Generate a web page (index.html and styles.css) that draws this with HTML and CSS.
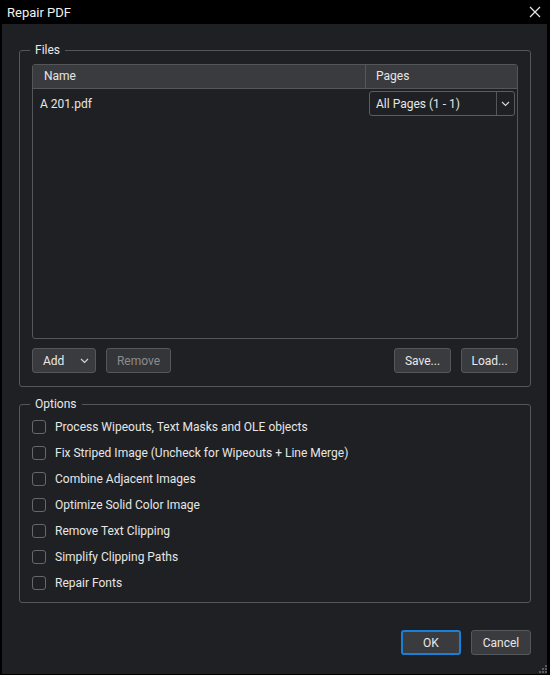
FILE: index.html
```html
<!DOCTYPE html>
<html lang="en">
<head>
    <meta charset="UTF-8">
    <title>Repair PDF</title>
    <link rel="stylesheet" href="styles.css">
</head>
<body>
    <div class="dialog">
        <div class="title-bar">
            <span class="title">Repair PDF</span>
            <svg class="close-icon" width="12" height="12" viewBox="0 0 12 12">
                <path d="M1 1 L11 11 M11 1 L1 11" stroke="#e8e8e8" stroke-width="1.2" fill="none"/>
            </svg>
        </div>

        <div class="dialog-body">
            <div class="group files-group">
                <span class="group-title">Files</span>

                <div class="file-table">
                    <div class="table-head">
                        <div class="col-name">Name</div>
                        <div class="col-pages">Pages</div>
                    </div>
                    <div class="table-row">
                        <div class="col-name">A 201.pdf</div>
                        <div class="col-pages">
                            <div class="combo">
                                <span class="combo-text">All Pages (1 - 1)</span>
                                <span class="combo-arrow">
                                    <svg width="9" height="6" viewBox="0 0 9 6"><path d="M1 1 L4.5 4.5 L8 1" stroke="#d8d8d8" stroke-width="1.1" fill="none"/></svg>
                                </span>
                            </div>
                        </div>
                    </div>
                </div>

                <div class="file-actions">
                    <button class="btn btn-add">Add
                        <svg width="9" height="6" viewBox="0 0 9 6"><path d="M1 1 L4.5 4.5 L8 1" stroke="#d8d8d8" stroke-width="1.1" fill="none"/></svg>
                    </button>
                    <button class="btn btn-remove" disabled>Remove</button>
                    <span class="spacer"></span>
                    <button class="btn btn-save">Save...</button>
                    <button class="btn btn-load">Load...</button>
                </div>
            </div>

            <div class="group options-group">
                <span class="group-title">Options</span>
                <label class="option"><span class="checkbox"></span>Process Wipeouts, Text Masks and OLE objects</label>
                <label class="option"><span class="checkbox"></span>Fix Striped Image (Uncheck for Wipeouts + Line Merge)</label>
                <label class="option"><span class="checkbox"></span>Combine Adjacent Images</label>
                <label class="option"><span class="checkbox"></span>Optimize Solid Color Image</label>
                <label class="option"><span class="checkbox"></span>Remove Text Clipping</label>
                <label class="option"><span class="checkbox"></span>Simplify Clipping Paths</label>
                <label class="option"><span class="checkbox"></span>Repair Fonts</label>
            </div>

            <div class="dialog-buttons">
                <button class="btn btn-ok">OK</button>
                <button class="btn btn-cancel">Cancel</button>
            </div>

            <svg class="grip" width="8" height="8" viewBox="0 0 8 8">
                <rect x="6" y="0" width="2" height="2" fill="#5a5b5e"/>
                <rect x="3" y="3" width="2" height="2" fill="#5a5b5e"/>
                <rect x="6" y="3" width="2" height="2" fill="#5a5b5e"/>
                <rect x="0" y="6" width="2" height="2" fill="#5a5b5e"/>
                <rect x="3" y="6" width="2" height="2" fill="#5a5b5e"/>
                <rect x="6" y="6" width="2" height="2" fill="#5a5b5e"/>
            </svg>
        </div>
    </div>
</body>
</html>
```

FILE: styles.css
```css
body {
    margin: 0;
    padding: 0;
    background: #000;
    font-family: Roboto, "Noto Sans", sans-serif;
    font-size: 12px;
    color: #e6e6e6;
}

.dialog {
    width: 550px;
    height: 675px;
    background: #000;
    display: flex;
    flex-direction: column;
}

.title-bar {
    height: 24px;
    display: flex;
    align-items: center;
    justify-content: space-between;
    padding: 0 9px 0 7px;
    color: #f2f2f2;
}

.title {
    font-size: 13px;
}

.dialog-body {
    position: relative;
    flex: 1;
    margin: 0 3px 1px 2px;
    background: #1f2023;
    padding: 26px 16px 0 17px;
}

.group {
    position: relative;
    border: 1px solid #55565a;
    border-radius: 3px;
}

.group-title {
    position: absolute;
    top: -9px;
    left: 10px;
    padding: 0 5px;
    line-height: 16px;
    background: #1f2023;
    color: #e8e8e8;
}

.files-group {
    padding: 13px 12px 13px 12px;
}

.file-table {
    height: 273px;
    border: 1px solid #55565a;
    border-radius: 3px;
    overflow: hidden;
}

.table-head {
    display: flex;
    height: 23px;
    background: #3a3b3e;
    border-bottom: 1px solid #55565a;
}

.table-head .col-name {
    width: 321px;
    padding-left: 11px;
    border-right: 1px solid #55565a;
    line-height: 23px;
}

.table-head .col-pages {
    padding-left: 10px;
    line-height: 23px;
}

.table-row {
    display: flex;
    align-items: center;
    height: 29px;
}

.table-row .col-name {
    width: 329px;
    padding-left: 7px;
}

.table-row .col-pages {
    flex: 1;
    padding-right: 2px;
}

.combo {
    display: flex;
    height: 23px;
    border: 1px solid #5c5d61;
    border-radius: 3px;
    align-items: center;
}

.combo-text {
    flex: 1;
    padding-left: 6px;
}

.combo-arrow {
    width: 17px;
    height: 23px;
    border-left: 1px solid #55565a;
    display: flex;
    align-items: center;
    justify-content: center;
}

.file-actions {
    display: flex;
    gap: 10px;
    margin-top: 9px;
}

.spacer {
    flex: 1;
}

.btn {
    height: 25px;
    background: #3a3b3e;
    border: 1px solid #56575b;
    border-radius: 3px;
    color: #e8e8e8;
    font-family: Roboto, "Noto Sans", sans-serif;
    font-size: 12px;
    padding: 0;
}

.btn-add {
    width: 64px;
    display: flex;
    align-items: center;
    justify-content: space-between;
    padding: 0 6px 0 10px;
}

.btn-remove {
    width: 65px;
    color: #8c8c8e;
    background: #343538;
}

.btn-save {
    width: 57px;
}

.btn-load {
    width: 57px;
}

.options-group {
    margin-top: 17px;
    padding: 9px 12px 6px 12px;
}

.option {
    display: flex;
    align-items: center;
    height: 26px;
    color: #e6e6e6;
}

.checkbox {
    width: 12px;
    height: 12px;
    border: 1px solid #66676b;
    border-radius: 3px;
    margin-right: 9px;
}

.dialog-buttons {
    display: flex;
    justify-content: flex-end;
    gap: 10px;
    margin-top: 27px;
}

.btn-ok,
.btn-cancel {
    width: 60px;
}

.btn-ok {
    border: 2px solid #1a7fd6;
}

.grip {
    position: absolute;
    right: 0;
    bottom: 1px;
}
```
